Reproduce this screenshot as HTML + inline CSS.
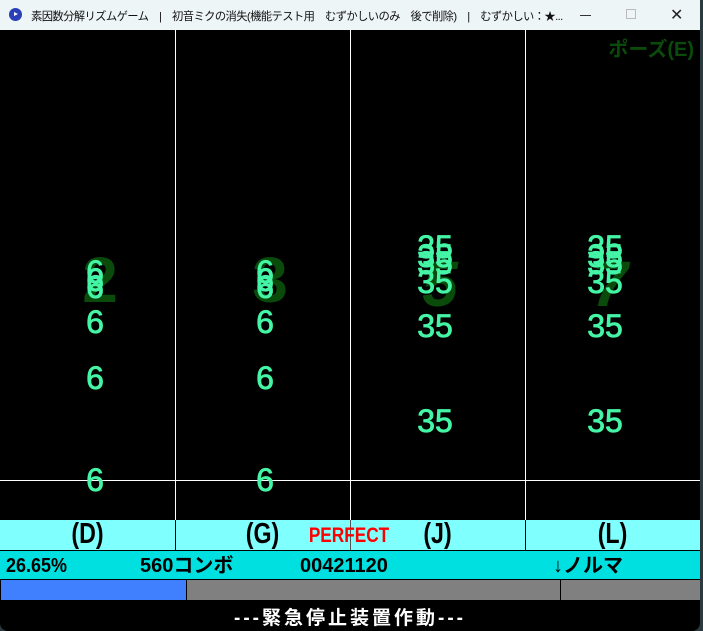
<!DOCTYPE html>
<html><head><meta charset="utf-8"><style>
*{margin:0;padding:0;box-sizing:border-box}
body{width:703px;height:631px;background:#2b3a3e;position:relative;overflow:hidden;font-family:"Liberation Sans","Noto Sans CJK JP",sans-serif}
.win{position:absolute;left:0;top:0;width:700px;height:631px;background:#000;border-radius:0 0 8px 8px;overflow:hidden}
.title{position:absolute;left:0;top:0;width:700px;height:30px;background:#eef5f7;font-size:11.3px;color:#111;white-space:pre}
.title .t{position:absolute;left:31px;top:8px;letter-spacing:-0.6px}
.ico{position:absolute;left:9px;top:8px;width:13px;height:13px;border-radius:50%;background:#2a3fb8}
.ico:after{content:"";position:absolute;left:5px;top:4px;border-left:4px solid #fff;border-top:2.5px solid transparent;border-bottom:2.5px solid transparent}
.ab{position:absolute;white-space:nowrap}
.v{position:absolute;top:30px;width:1px;height:520px;background:#fff}
.h{position:absolute;left:0;top:480px;width:700px;height:1px;background:#fff}
.n{position:absolute;font-size:32px;line-height:1;color:#44f5a6;width:60px;text-align:center;-webkit-text-stroke:0.8px #44f5a6}
.d{position:absolute;font-size:64px;line-height:1;color:#0a4a0a;font-weight:bold;width:60px;text-align:center}
.keys{position:absolute;left:0;top:520px;width:700px;height:31px;background:#80ffff;border-bottom:1px solid #000}
.k{position:absolute;top:-1px;font-size:29px;line-height:31px;font-weight:bold;color:#000;width:175px;text-align:center;transform:scaleX(.8)}
.stat{position:absolute;left:0;top:551px;width:700px;height:29px;background:#00e0e0;border-bottom:1px solid #000;font-size:20px;font-weight:bold;color:#000;white-space:nowrap}
.stat span{position:absolute;top:5px;line-height:20px;height:20px;white-space:nowrap}
</style></head><body>
<div class="win">
<div class="title"><div class="ico"></div><span class="t">素因数分解リズムゲーム　|　初音ミクの消失(機能テスト用　むずかしいのみ　後で削除)　|　むずかしい：★...</span>
<span class="ab" style="left:580px;top:15px;width:11px;height:1px;background:#333"></span>
<span class="ab" style="left:626px;top:9px;width:10px;height:10px;border:1px solid #bbb"></span>
<span class="ab" style="left:670px;top:5px;font-size:16px;color:#222">✕</span>
</div>
<div class="ab" style="right:6px;top:33px;font-size:20px;font-weight:bold;color:#0a4a0a">ポーズ(E)</div>
<div class="v" style="left:175px"></div><div class="v" style="left:350px"></div><div class="v" style="left:525px"></div>
<div class="h"></div>
<div class="d" style="left:70px;top:248px">2</div>
<div class="d" style="left:240px;top:248px">3</div>
<div class="d" style="left:410px;top:252px;font-style:italic">5</div>
<div class="d" style="left:580px;top:252px;font-style:italic">7</div>
<div class="n" style="left:65px;top:256px">6</div><div class="n" style="left:65px;top:264px">6</div><div class="n" style="left:65px;top:271px">6</div><div class="n" style="left:65px;top:306px">6</div><div class="n" style="left:65px;top:362px">6</div><div class="n" style="left:65px;top:464px">6</div>
<div class="n" style="left:235px;top:256px">6</div><div class="n" style="left:235px;top:264px">6</div><div class="n" style="left:235px;top:271px">6</div><div class="n" style="left:235px;top:306px">6</div><div class="n" style="left:235px;top:362px">6</div><div class="n" style="left:235px;top:464px">6</div>
<div class="n" style="left:405px;top:231px">35</div><div class="n" style="left:405px;top:240px">35</div><div class="n" style="left:405px;top:247px">35</div><div class="n" style="left:405px;top:266px">35</div><div class="n" style="left:405px;top:310px">35</div><div class="n" style="left:405px;top:405px">35</div>
<div class="n" style="left:575px;top:231px">35</div><div class="n" style="left:575px;top:240px">35</div><div class="n" style="left:575px;top:247px">35</div><div class="n" style="left:575px;top:266px">35</div><div class="n" style="left:575px;top:310px">35</div><div class="n" style="left:575px;top:405px">35</div>
<div class="keys">
<div class="ab" style="left:175px;top:0;width:1px;height:30px;background:#000"></div>
<div class="ab" style="left:525px;top:0;width:1px;height:30px;background:#000"></div>
<div class="ab" style="left:350px;top:0;width:1px;height:30px;background:#555"></div>
<div class="k" style="left:0">(D)</div><div class="k" style="left:175px">(G)</div><div class="k" style="left:350px">(J)</div><div class="k" style="left:525px">(L)</div>
<div class="ab" style="left:300px;top:4px;width:98px;text-align:center;color:#f00;font-size:21px;font-weight:bold;transform:scaleX(.82)">PERFECT</div>
</div>
<div class="stat"><span style="left:6px;transform:scaleX(.9);transform-origin:left">26.65%</span><span style="left:140px">560コンボ</span><span style="left:300px">00421120</span><span style="left:553px">↓ノルマ</span></div>
<div class="ab" style="left:1px;top:580px;width:185px;height:20px;background:#4080ff"></div>
<div class="ab" style="left:187px;top:580px;width:373px;height:20px;background:#808080"></div>
<div class="ab" style="left:561px;top:580px;width:139px;height:20px;background:#808080"></div>
<div class="ab" style="left:0;top:603px;width:700px;text-align:center;color:#fff;font-size:19px;font-weight:bold;letter-spacing:3px">---緊急停止装置作動---</div>
</div>
</body></html>
